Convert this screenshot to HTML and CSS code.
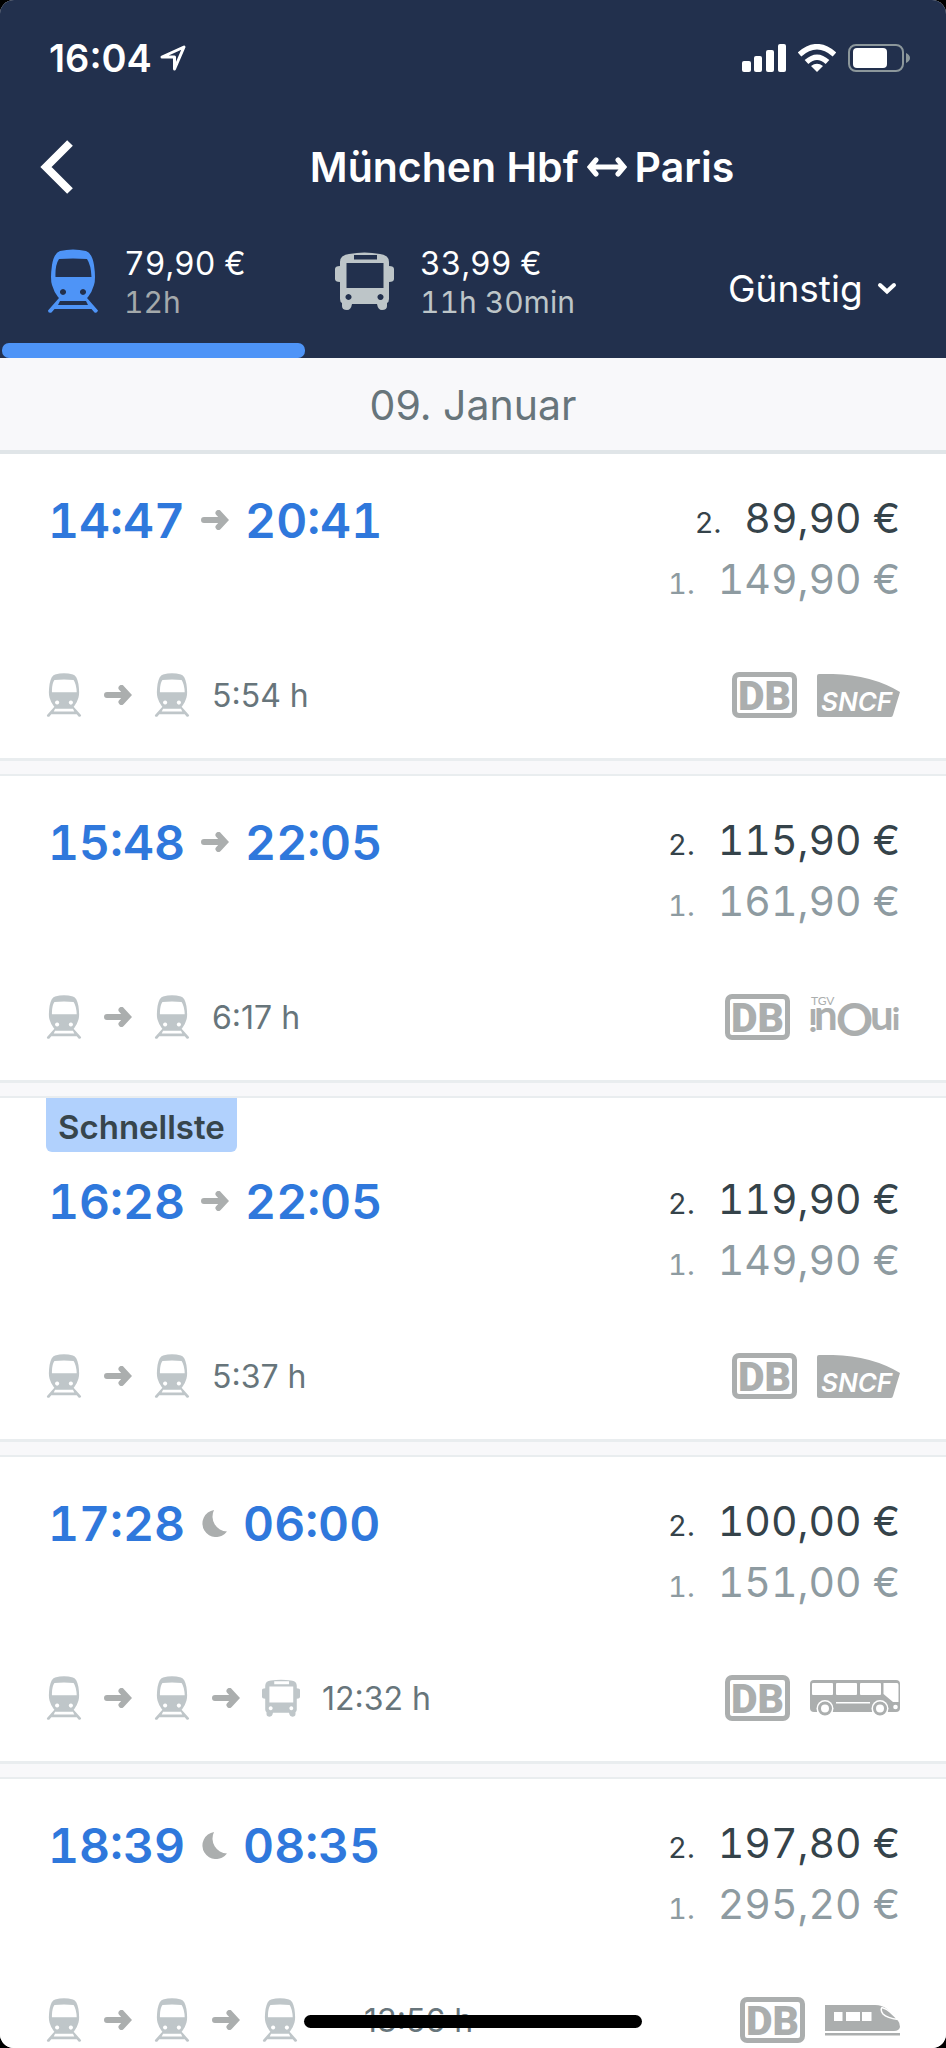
FILE: index.html
```html
<!DOCTYPE html>
<html lang="de">
<head>
    <meta charset="UTF-8">
    <meta name="viewport" content="width=device-width, initial-scale=1.0">
    <title>München Hbf - Paris</title>
    <link rel="stylesheet" href="styles.css">
</head>
<body>
  <!-- icons -->
  <svg class="sprite" aria-hidden="true">
    <symbol id="train" viewBox="0 0 50 64">
      <path fill="currentColor" fill-rule="evenodd" d="M12 2Q25-1 38 2Q44 4 46 16Q48 30 46 36Q44 43 40 48L39 49L50 61.500Q49 64.500 46.500 63.500L43.500 60H6.500L3.500 63.500Q0 64.500 0 61.500L11 49L10 48Q6 43 4 36Q2 30 4 16Q6 4 12 2ZM11 10Q7 16 7.500 28H43.500Q43 16 39 10Q25 9 11 10ZM15 40a3 3 0 1 0 .01 0ZM35 40a3 3 0 1 0 .01 0ZM12 52L10 56H40L38 52Z"/>
    </symbol>
    <symbol id="bus" viewBox="0 0 59 58">
      <path fill="currentColor" fill-rule="evenodd" d="M5 10Q5 3 14 2Q29.500-1 45 2Q54 3 54 10V14Q59 14 59 17V27Q59 30 54 30V47Q54 50 52 51V54Q52 58 47 58Q43 58 42 52H17Q16 58 12 58Q7 58 7 54V51Q5 50 5 47V30Q0 30 0 27V17Q0 14 5 14ZM11.500 11V36H48.500V11ZM19 3V7.500H42V3ZM13.500 42a3 3 0 1 0 .01 0ZM45.500 42a3 3 0 1 0 .01 0Z"/>
    </symbol>
    <symbol id="arrow" viewBox="0 0 28 20">
      <path fill="none" stroke="currentColor" stroke-width="6" stroke-linecap="round" d="M3 10H21M17.500 3L24 10L17.500 17"/>
    </symbol>
    <symbol id="moon" viewBox="0 0 26 27">
      <path fill="currentColor" d="M13 0A13.600 13.600 0 1 0 26 21.500A15 15 0 0 1 13 0Z"/>
    </symbol>
    <symbol id="coach" viewBox="0 0 90 36">
      <rect width="90" height="32" rx="4" fill="currentColor"/>
      <g fill="#fff">
        <rect x="2" y="3" width="21" height="12" rx="1"/>
        <rect x="26" y="3" width="21" height="12" rx="1"/>
        <rect x="50" y="3" width="21" height="12" rx="1"/>
        <path d="M73.500 3H87Q88.500 3 88.500 5V22H83L73.500 14Z"/>
        <rect x="26" y="22" width="34" height="1.500"/>
        <circle cx="15" cy="28.500" r="8.500"/>
        <circle cx="70" cy="28.500" r="8.500"/>
        <circle cx="85.500" cy="27" r="2.300"/>
      </g>
      <g fill="#fff" stroke="currentColor" stroke-width="3">
        <circle cx="15" cy="28.500" r="5.500"/>
        <circle cx="70" cy="28.500" r="5.500"/>
      </g>
    </symbol>
    <symbol id="ice" viewBox="0 0 75 31">
      <path fill="currentColor" d="M0 0H50Q57 0 62 4L72 14Q75 18 75 22Q74 26 69 26H0ZM0 28H75V30.500H0Z"/>
      <path fill="#fff" d="M9 7H17.500V16H9ZM21 7H35V16H21ZM37 7H46.500V16H37Z"/>
      <path fill="currentColor" stroke="#fff" stroke-width="1.500" d="M57 2.500Q62 4 65 7L73 14.500Q62 13 58 9Q55 5 57 2.500Z"/>
    </symbol>
  </svg>

  <div class="screen">
    <header class="header">
      <div class="status">
        <span class="clock">16:04</span>
        <svg class="location" width="26" height="26" viewBox="0 0 26 26"><path fill="none" stroke="#fff" stroke-width="3" stroke-linejoin="round" d="M2 12L24 2L14.500 24V12Z"/></svg>
        <div class="status-icons">
          <svg width="44" height="28" viewBox="0 0 44 28" fill="#fff"><rect y="17" width="9" height="11" rx="2"/><rect x="12" y="12" width="8" height="16" rx="2"/><rect x="24" y="6" width="8" height="22" rx="2"/><rect x="36" width="8" height="28" rx="2"/></svg>
          <svg width="38" height="28" viewBox="0 0 38 28"><g fill="none" stroke="#fff" stroke-width="5.500"><path d="M1.500 10.500Q19-5 36.500 10.500"/><path d="M8.500 18Q19 8.500 29.500 18"/></g><path fill="#fff" d="M13 22Q19 17.500 25 22L19 28Z"/></svg>
          <svg width="62" height="28" viewBox="0 0 62 28"><rect x="1" y="1" width="54" height="26" rx="7" fill="none" stroke="#8c979b" stroke-width="2"/><rect x="5" y="4" width="34" height="20" rx="4" fill="#fff"/><path fill="#8c979b" d="M58 9Q62 11 62 14Q62 17 58 19Z"/></svg>
        </div>
      </div>
      <div class="title-bar">
        <button class="back" aria-label="Zurück">
          <svg width="34" height="54" viewBox="0 0 34 54"><path fill="none" stroke="#fff" stroke-width="8" d="M30 3L6 27L30 51"/></svg>
        </button>
        <h1>München Hbf
          <svg width="40" height="20" viewBox="0 0 40 20"><path fill="none" stroke="#fff" stroke-width="5" stroke-linecap="round" d="M4 10H36M9 3L3 10L9 17M31 3L37 10L31 17"/></svg>
          Paris</h1>
      </div>
      <nav class="tabs">
        <button class="tab active">
          <svg class="tab-train"><use href="#train"/></svg>
          <span class="tab-text"><span class="tab-price">79,90 €</span><span class="tab-time">12h</span></span>
        </button>
        <button class="tab">
          <svg class="tab-bus"><use href="#bus"/></svg>
          <span class="tab-text"><span class="tab-price">33,99 €</span><span class="tab-time">11h 30min</span></span>
        </button>
        <label class="sort">
          <select aria-label="Sortierung">
            <option>Günstig</option>
          </select>
          <svg width="20" height="14" viewBox="0 0 20 14"><path fill="none" stroke="#fff" stroke-width="4" stroke-linecap="round" d="M3 4L10 10.500L17 4"/></svg>
        </label>
      </nav>
    </header>

    <h2 class="date">09. Januar</h2>

    <main class="trips">
      <article class="trip">
        <div class="row">
          <div class="times">14:47 <svg class="arrow"><use href="#arrow"/></svg> 20:41</div>
          <div class="prices">
            <p><small>2.</small> 89,90 €</p>
            <p class="first"><small>1.</small> 149,90 €</p>
          </div>
        </div>
        <div class="row bottom">
          <div class="route">
            <svg class="vehicle"><use href="#train"/></svg>
            <svg class="arrow"><use href="#arrow"/></svg>
            <svg class="vehicle"><use href="#train"/></svg>
            <span class="duration">5:54 h</span>
          </div>
          <div class="logos">
            <span class="db">DB</span>
            <svg class="sncf" viewBox="0 0 83 43">
              <path fill="currentColor" d="M2 0H16Q55 1 83 18L76 41Q75.500 43 74 43H2Q0 43 0 41V2Q0 0 2 0Z"/>
              <text class="sncf-text" x="4" y="37">SNCF</text>
            </svg>
          </div>
        </div>
      </article>

      <article class="trip">
        <div class="row">
          <div class="times">15:48 <svg class="arrow"><use href="#arrow"/></svg> 22:05</div>
          <div class="prices">
            <p><small>2.</small> 115,90 €</p>
            <p class="first"><small>1.</small> 161,90 €</p>
          </div>
        </div>
        <div class="row bottom">
          <div class="route">
            <svg class="vehicle"><use href="#train"/></svg>
            <svg class="arrow"><use href="#arrow"/></svg>
            <svg class="vehicle"><use href="#train"/></svg>
            <span class="duration">6:17 h</span>
          </div>
          <div class="logos">
            <span class="db">DB</span>
            <svg class="inoui" viewBox="0 0 90 42">
              <text class="tgv-text" x="1" y="9">TGV</text>
              <text class="inoui-text small" x="-7" y="-13" transform="rotate(180)">i</text>
              <text class="inoui-text" x="4" y="34">n</text>
              <text class="inoui-text big" x="26" y="40">O</text>
              <text class="inoui-text" x="60" y="34">u</text>
              <text class="inoui-text small" x="82" y="34">i</text>
            </svg>
          </div>
        </div>
      </article>

      <article class="trip fastest">
        <span class="badge">Schnellste</span>
        <div class="row">
          <div class="times">16:28 <svg class="arrow"><use href="#arrow"/></svg> 22:05</div>
          <div class="prices">
            <p><small>2.</small> 119,90 €</p>
            <p class="first"><small>1.</small> 149,90 €</p>
          </div>
        </div>
        <div class="row bottom">
          <div class="route">
            <svg class="vehicle"><use href="#train"/></svg>
            <svg class="arrow"><use href="#arrow"/></svg>
            <svg class="vehicle"><use href="#train"/></svg>
            <span class="duration">5:37 h</span>
          </div>
          <div class="logos">
            <span class="db">DB</span>
            <svg class="sncf" viewBox="0 0 83 43">
              <path fill="currentColor" d="M2 0H16Q55 1 83 18L76 41Q75.500 43 74 43H2Q0 43 0 41V2Q0 0 2 0Z"/>
              <text class="sncf-text" x="4" y="37">SNCF</text>
            </svg>
          </div>
        </div>
      </article>

      <article class="trip">
        <div class="row">
          <div class="times">17:28 <svg class="moon"><use href="#moon"/></svg> 06:00</div>
          <div class="prices">
            <p><small>2.</small> 100,00 €</p>
            <p class="first"><small>1.</small> 151,00 €</p>
          </div>
        </div>
        <div class="row bottom">
          <div class="route">
            <svg class="vehicle"><use href="#train"/></svg>
            <svg class="arrow"><use href="#arrow"/></svg>
            <svg class="vehicle"><use href="#train"/></svg>
            <svg class="arrow"><use href="#arrow"/></svg>
            <svg class="vehicle bus"><use href="#bus"/></svg>
            <span class="duration">12:32 h</span>
          </div>
          <div class="logos">
            <span class="db">DB</span>
            <svg class="coach"><use href="#coach"/></svg>
          </div>
        </div>
      </article>

      <article class="trip">
        <div class="row">
          <div class="times">18:39 <svg class="moon"><use href="#moon"/></svg> 08:35</div>
          <div class="prices">
            <p><small>2.</small> 197,80 €</p>
            <p class="first"><small>1.</small> 295,20 €</p>
          </div>
        </div>
        <div class="row bottom">
          <div class="route long">
            <svg class="vehicle"><use href="#train"/></svg>
            <svg class="arrow"><use href="#arrow"/></svg>
            <svg class="vehicle"><use href="#train"/></svg>
            <svg class="arrow"><use href="#arrow"/></svg>
            <svg class="vehicle"><use href="#train"/></svg>
            <span class="duration">13:56 h</span>
          </div>
          <div class="logos">
            <span class="db">DB</span>
            <svg class="ice"><use href="#ice"/></svg>
          </div>
        </div>
      </article>
    </main>
    <div class="home-bar"></div>
  </div>
</body>
</html>
```
FILE: styles.css
```css
*{
    margin: 0;
    padding: 0;
    box-sizing: border-box;
}
body{
    background-color: #000;
    font-family: Inter, "Liberation Sans", sans-serif;
}
svg{
    display: block;
    flex: none;
}
button, select{
    background: none;
    border: none;
    font: inherit;
    color: inherit;
    cursor: pointer;
}
.sprite{
    position: absolute;
    width: 0;
    height: 0;
}
.screen{
    position: relative;
    height: 100vh;
    overflow: hidden;
    border-radius: 14px;
    background-color: #f8f8fa;
}

/* header */
.header{
    background-color: #22304d;
    color: #fff;
}
.status{
    display: flex;
    align-items: center;
    height: 116px;
    padding: 0 36px 0 49px;
}
.clock{
    font-size: 38px;
    font-weight: 600;
}
.location{
    margin-left: 8px;
}
.status-icons{
    display: flex;
    gap: 12px;
    margin-left: auto;
}
.title-bar{
    display: flex;
    align-items: center;
    height: 102px;
}
.back{
    width: 98px;
    padding-left: 40px;
}
h1{
    flex: 1;
    display: flex;
    align-items: center;
    justify-content: center;
    gap: 8px;
    font-size: 41px;
    font-weight: 600;
}
.tabs{
    display: flex;
    height: 140px;
}
.tab{
    position: relative;
    display: flex;
    align-items: center;
    gap: 26px;
    padding: 0 29px 15px;
    text-align: left;
    color: #bdc5c8;
}
.tab.active{
    min-width: 306px;
    padding-left: 48px;
    color: #4e94f7;
}
.tab.active::after{
    content: "";
    position: absolute;
    left: 2px;
    right: 1px;
    bottom: 0;
    height: 15px;
    border-radius: 7px;
    background-color: #4e94f7;
}
.tab-train{
    width: 50px;
    height: 64px;
}
.tab-bus{
    width: 59px;
    height: 58px;
}
.tab-text{
    display: flex;
    flex-direction: column;
    padding-top: 4px;
    font-variant-numeric: tabular-nums;
}
.tab-price{
    font-size: 32px;
    line-height: 38px;
    color: #fff;
}
.tab-time{
    font-size: 30px;
    line-height: 38px;
    color: #bdc5c8;
}
.active .tab-time{
    color: #a4a9ab;
}
.sort{
    display: flex;
    align-items: center;
    gap: 14px;
    margin-left: auto;
    padding-right: 49px;
}
.sort select{
    appearance: none;
    font-size: 37px;
}

.date{
    padding: 18px 0 16px;
    border-bottom: 4px solid #e0e5e8;
    text-align: center;
    font-size: 41px;
    font-weight: 400;
    line-height: 58px;
    color: #67757b;
}

/* trips */
.trip{
    padding: 34px 46px 40px;
    margin-bottom: 13px;
    border-bottom: 3px solid #e9edef;
    background-color: #fff;
}
.trip + .trip{
    border-top: 2px solid #e9edef;
}
.trip.fastest{
    padding-top: 0;
}
.badge{
    display: block;
    width: fit-content;
    margin-bottom: 17px;
    padding: 4px 12px 0;
    border-radius: 0 0 6px 6px;
    background-color: #b1d1fd;
    font-size: 33px;
    font-weight: 600;
    line-height: 50px;
    color: #37454c;
}
.row{
    display: flex;
    justify-content: space-between;
}
.times{
    display: flex;
    align-items: center;
    gap: 16px;
    height: 64px;
    padding-left: 2px;
    font-size: 48px;
    font-weight: 600;
    font-variant-numeric: tabular-nums;
    color: #2f78dc;
}
.prices{
    text-align: right;
    font-size: 41px;
    line-height: 61px;
    font-variant-numeric: tabular-nums;
    color: #35434a;
}
.prices .first{
    color: #8e9ba1;
}
.prices small{
    margin-right: 12px;
    font-size: 29px;
    line-height: 1;
}
.arrow{
    width: 28px;
    height: 20px;
    color: #abaeae;
}
.moon{
    width: 26px;
    height: 27px;
    color: #abaeae;
}
.bottom{
    align-items: center;
    height: 46px;
    margin-top: 62px;
}
.route{
    display: flex;
    align-items: center;
    gap: 22px;
}
.vehicle{
    width: 36px;
    height: 44px;
    color: #bfc6c9;
}
.vehicle.bus{
    width: 38px;
    height: 38px;
}
.duration{
    font-size: 32px;
    color: #67757b;
}
.long .duration{
    margin-left: 44px;
}
.logos{
    display: flex;
    align-items: center;
    gap: 20px;
    color: #abaeae;
}
.db{
    width: 65px;
    height: 46px;
    border: 5px solid #abaeae;
    border-radius: 7px;
    text-align: center;
    font-family: Roboto, "Liberation Sans", sans-serif;
    font-size: 41px;
    font-weight: 900;
    line-height: 38px;
}
.sncf{
    width: 83px;
    height: 43px;
}
.inoui{
    width: 90px;
    height: 42px;
    overflow: visible;
}
.coach{
    width: 90px;
    height: 36px;
}
.ice{
    width: 75px;
    height: 31px;
}
.sncf-text{
    font-size: 26px;
    font-weight: 600;
    font-style: italic;
    fill: #fff;
}
.tgv-text{
    font-family: Lato, sans-serif;
    font-size: 12px;
    fill: currentColor;
}
.inoui-text{
    font-family: Lato, sans-serif;
    font-size: 42px;
    font-weight: 700;
    fill: currentColor;
}
.inoui-text.big{
    font-size: 46px;
}
.inoui-text.small{
    font-size: 31px;
    font-weight: 900;
}

.home-bar{
    position: absolute;
    left: 50%;
    bottom: 20px;
    width: 338px;
    height: 13px;
    margin-left: -169px;
    border-radius: 7px;
    background-color: #000;
}
```
